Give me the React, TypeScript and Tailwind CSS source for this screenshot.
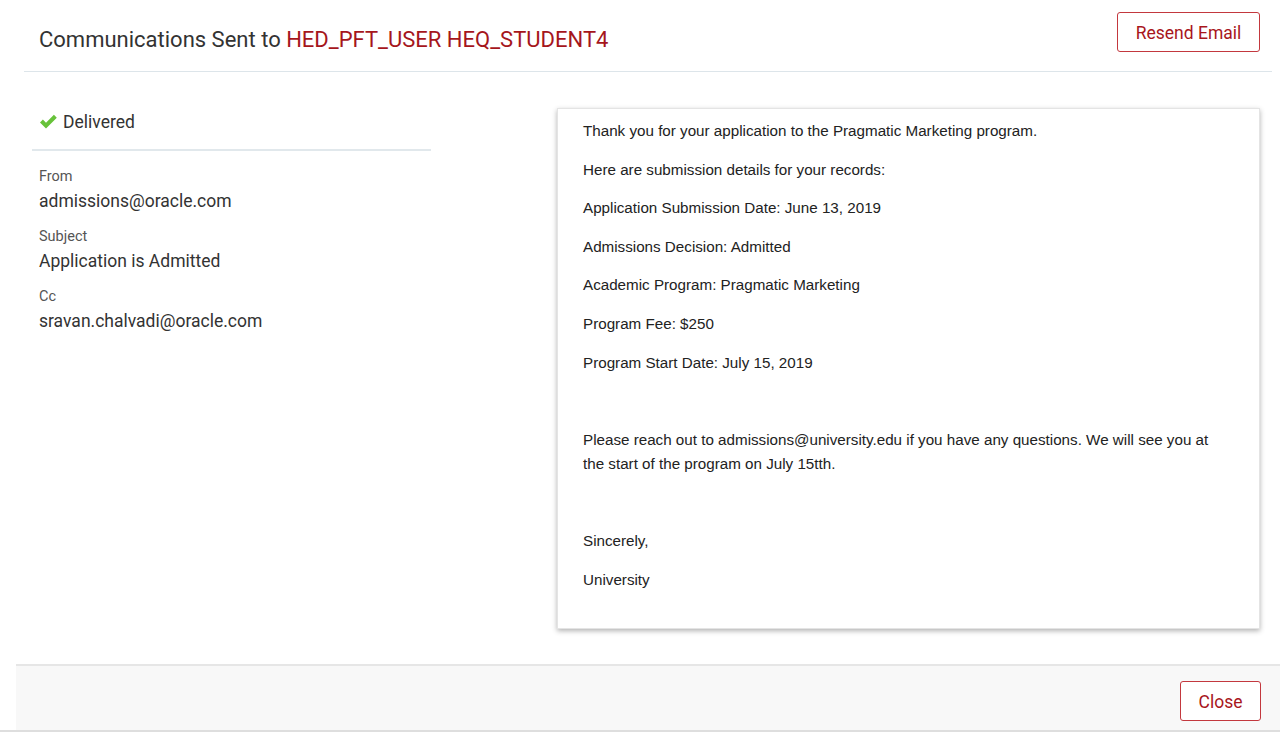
import React from "react";

function Check() {
  return (
    <svg width="19" height="16" viewBox="0 0 19 16" className="shrink-0">
      <path d="M1 8.5 L3.9 5.6 L7 8.7 L14.9 0.8 L17.8 3.7 L7 14.5 Z" fill="#67c23a" />
    </svg>
  );
}

const paras: string[] = [
  "Thank you for your application to the Pragmatic Marketing program.",
  "Here are submission details for your records:",
  "Application Submission Date: June 13, 2019",
  "Admissions Decision: Admitted",
  "Academic Program: Pragmatic Marketing",
  "Program Fee: $250",
  "Program Start Date: July 15, 2019",
  "",
  "Please reach out to admissions@university.edu if you have any questions. We will see you at the start of the program on July 15tth.",
  "",
  "Sincerely,",
  "University",
];

export default function App() {
  return (
    <div className="w-full h-[732px] bg-white flex flex-col overflow-hidden font-['Roboto',sans-serif] text-[#333]">
      {/* Header */}
      <div className="h-[72px] ml-[24px] mr-[8px] border-b border-[#dde5ea] flex items-start justify-between shrink-0">
        <div className="mt-[26px] pl-[15px] text-[22px] leading-[28px] text-[#333]">
          Communications Sent to <span className="text-[#a5161c]">HED_PFT_USER HEQ_STUDENT4</span>
        </div>
        <button className="mt-[12px] mr-[12px] h-[40px] w-[143px] rounded-[3px] border border-[#c3383e] text-[#a8161c] text-[17.5px] leading-[24px] pt-[1px] bg-white">
          Resend Email
        </button>
      </div>

      {/* Body */}
      <div className="flex-1 flex items-start">
        <div className="ml-[32px] w-[399px] mt-[39px]">
          <div className="flex items-center gap-[5px] pl-[7px] pb-[16px] h-[40px] border-b-2 border-[#e1e8ec] text-[17.5px] leading-[24px]">
            <Check />
            <span className="text-[#333]">Delivered</span>
          </div>
          <div className="pl-[7px] pt-[16px] flex flex-col gap-[14px]">
            <div>
              <div className="text-[14.5px] leading-[20px] text-[#555]">From</div>
              <div className="mt-[2px] text-[17.5px] leading-[24px] text-[#333]">admissions@oracle.com</div>
            </div>
            <div>
              <div className="text-[14.5px] leading-[20px] text-[#555]">Subject</div>
              <div className="mt-[2px] text-[17.5px] leading-[24px] text-[#333]">Application is Admitted</div>
            </div>
            <div>
              <div className="text-[14.5px] leading-[20px] text-[#555]">Cc</div>
              <div className="mt-[2px] text-[17.5px] leading-[24px] text-[#333]">sravan.chalvadi@oracle.com</div>
            </div>
          </div>
        </div>

        <div className="ml-auto mr-[20px] mt-[36px] w-[703px] h-[521px] bg-white border border-[#e4e4e4] shadow-[0_2px_5px_rgba(0,0,0,0.3)] pl-[25px] pr-[40px] pt-[10px] font-['Liberation_Sans',Arial,sans-serif] text-[15.2px] leading-[24px] text-[#222]">
          {paras.map((p, i) => (
            <p key={i} className="mb-[14.6px]">
              {p === "" ? "\u00a0" : p}
            </p>
          ))}
        </div>
      </div>

      {/* Footer */}
      <div className="h-[66px] ml-[16px] bg-[#f8f8f8] border-t-2 border-[#e6e6e6] flex justify-end items-start shrink-0">
        <button className="mt-[15px] mr-[19px] h-[40px] w-[81px] rounded-[3px] border border-[#c3383e] text-[#a8161c] text-[17.5px] leading-[24px] pt-[1px] bg-white">
          Close
        </button>
      </div>
      <div className="h-[2px] bg-[#dedede] shrink-0" />
    </div>
  );
}
